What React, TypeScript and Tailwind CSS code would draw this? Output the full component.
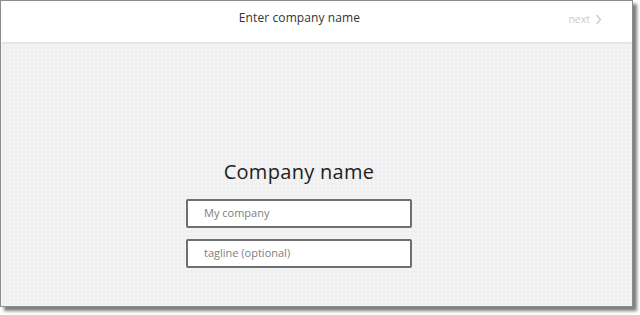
export default function App() {
  return (
    <div className="w-[640px] h-[315px] bg-white" style={{ fontFamily: '"Open Sans", "Noto Sans", sans-serif' }}>
      <div className="w-[633px] h-[307px] border border-[#8c8c8c] shadow-[4px_4px_3px_rgba(0,0,0,0.5)] flex flex-col overflow-hidden bg-[#efefef]">
        <div className="h-[41px] bg-white flex items-center relative shadow-[0_1px_2px_rgba(0,0,0,0.08)] z-10">
          <div className="flex-1 text-center text-[12px] text-[#333] pr-[34px] -mt-[7px] tracking-[0.1px]">Enter company name</div>
          <div className="absolute right-[30px] top-[11px] flex items-center gap-[5px] text-[10.5px] text-[#cccccc]">
            <span>next</span>
            <svg width="7" height="11" viewBox="0 0 7 11" fill="none" stroke="#c8c8c8" strokeWidth="1.3">
              <path d="M1.5 1 L5.5 5.5 L1.5 10" />
            </svg>
          </div>
        </div>
        <div
          className="flex-1 flex flex-col items-center pr-[35px]"
          style={{
            backgroundImage:
              'repeating-linear-gradient(90deg, rgba(255,255,255,0.35) 0 1px, transparent 1px 4px), repeating-linear-gradient(0deg, rgba(255,255,255,0.25) 0 1px, transparent 1px 4px)',
          }}
        >
          <div className="mt-[118px] text-[20px] text-[#1e1e1e] leading-[24px] tracking-[0.3px]">Company name</div>
          <div className="mt-[15px] w-[226px] h-[29px] border-2 border-[#6e6e6e] rounded-[2px] bg-white flex items-center pl-[16px] text-[11px] text-[#808080]">
            My company
          </div>
          <div className="mt-[11px] w-[226px] h-[29px] border-2 border-[#6e6e6e] rounded-[2px] bg-white flex items-center pl-[16px] text-[11px] text-[#808080]">
            tagline (optional)
          </div>
        </div>
      </div>
    </div>
  );
}
